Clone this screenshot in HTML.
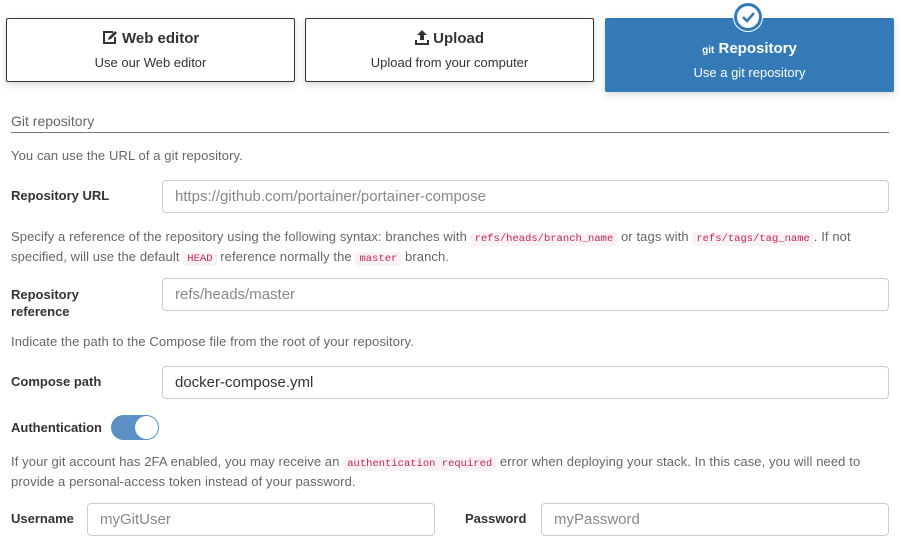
<!DOCTYPE html>
<html><head><meta charset="utf-8"><style>
body{margin:0;width:901px;height:549px;background:#fff;font-family:"Liberation Sans",sans-serif;color:#333;position:relative;overflow:hidden}
.box{position:absolute;border:1px solid #333;border-radius:2px;background:#fff;box-shadow:0 3px 8px rgba(0,0,0,.15);text-align:center;box-sizing:border-box}
.t{font-weight:bold;font-size:15px}
.s{font-size:13px;margin-top:8px}
.a{position:absolute;left:11px}
.help{position:absolute;left:11px;font-size:13px;color:#666;line-height:17px;width:872px;letter-spacing:0.1px}
.lbl{position:absolute;font-weight:bold;font-size:13px;color:#333}
.inp{position:absolute;border:1px solid #ccc;border-radius:4px;font-size:15px;color:#888;line-height:31px;padding-left:12px;box-sizing:border-box;height:33px}
code{font-family:"Liberation Mono",monospace;font-size:10.5px;color:#c7254e;background:#f9f2f4;padding:1px 4px;border-radius:3px;letter-spacing:0}
</style></head><body>
<div class="box" style="left:6px;top:18px;width:289px;height:64px"><div class="t" style="margin-top:11px">
<svg width="16" height="15" viewBox="0 0 16 15" style="vertical-align:-2px"><path d="M11 2H2v11h11V7" fill="none" stroke="#333" stroke-width="2"/><path d="M6 10l1-3 6-6 2 2-6 6z" fill="#333"/></svg> Web editor</div><div class="s">Use our Web editor</div></div>
<div class="box" style="left:305px;top:18px;width:289px;height:64px"><div class="t" style="margin-top:11px">
<svg width="14" height="15" viewBox="0 0 14 15" style="vertical-align:-2px"><path d="M7 0l5 5H9v5H5V5H2z" fill="#333"/><path d="M1 10v4h12v-4" fill="none" stroke="#333" stroke-width="2"/></svg> Upload</div><div class="s">Upload from your computer</div></div>
<div class="box" style="left:605px;top:18px;width:289px;height:74px;background:#337ab7;border-color:#337ab7;color:#fff"><div class="t" style="margin-top:21px"><span style="font-size:10px">git</span> Repository</div><div class="s">Use a git repository</div></div>
<div style="position:absolute;left:733px;top:2px;width:28px;height:28px;border-radius:50%;background:#337ab7;border:1px solid #fff"><div style="position:absolute;left:3px;top:3px;width:22px;height:22px;border-radius:50%;background:#fff"><svg width="22" height="22" viewBox="0 0 22 22"><path d="M6 11l4 4 7-8" fill="none" stroke="#337ab7" stroke-width="2.5"/></svg></div></div>
<div class="a" style="top:113px;font-size:14px;color:#666">Git repository</div>
<div style="position:absolute;left:11px;top:132px;width:878px;height:1px;background:#777"></div>
<div class="help" style="top:147px">You can use the URL of a git repository.</div>
<div class="lbl" style="left:11px;top:188px">Repository URL</div>
<div class="inp" style="left:162px;top:180px;width:727px">https://github.com/portainer/portainer-compose</div>
<div class="help" style="top:228px">Specify a reference of the repository using the following syntax: branches with <code>refs/heads/branch_name</code> or tags with <code>refs/tags/tag_name</code>. If not specified, will use the default <code>HEAD</code> reference normally the <code>master</code> branch.</div>
<div class="lbl" style="left:11px;top:286px;line-height:17px">Repository<br>reference</div>
<div class="inp" style="left:162px;top:278px;width:727px">refs/heads/master</div>
<div class="help" style="top:333px">Indicate the path to the Compose file from the root of your repository.</div>
<div class="lbl" style="left:11px;top:374px">Compose path</div>
<div class="inp" style="left:162px;top:366px;width:727px;color:#333">docker-compose.yml</div>
<div class="lbl" style="left:11px;top:420px">Authentication</div>
<div style="position:absolute;left:111px;top:415px;width:48px;height:25px;border-radius:13px;background:#5b8fc6"><div style="position:absolute;right:1px;top:1px;width:23px;height:23px;border-radius:50%;background:#fff"></div></div>
<div class="help" style="top:453px">If your git account has 2FA enabled, you may receive an <code>authentication required</code> error when deploying your stack. In this case, you will need to provide a personal-access token instead of your password.</div>
<div class="lbl" style="left:11px;top:511px">Username</div>
<div class="inp" style="left:87px;top:503px;width:348px">myGitUser</div>
<div class="lbl" style="left:465px;top:511px">Password</div>
<div class="inp" style="left:541px;top:503px;width:348px">myPassword</div>
</body></html>
